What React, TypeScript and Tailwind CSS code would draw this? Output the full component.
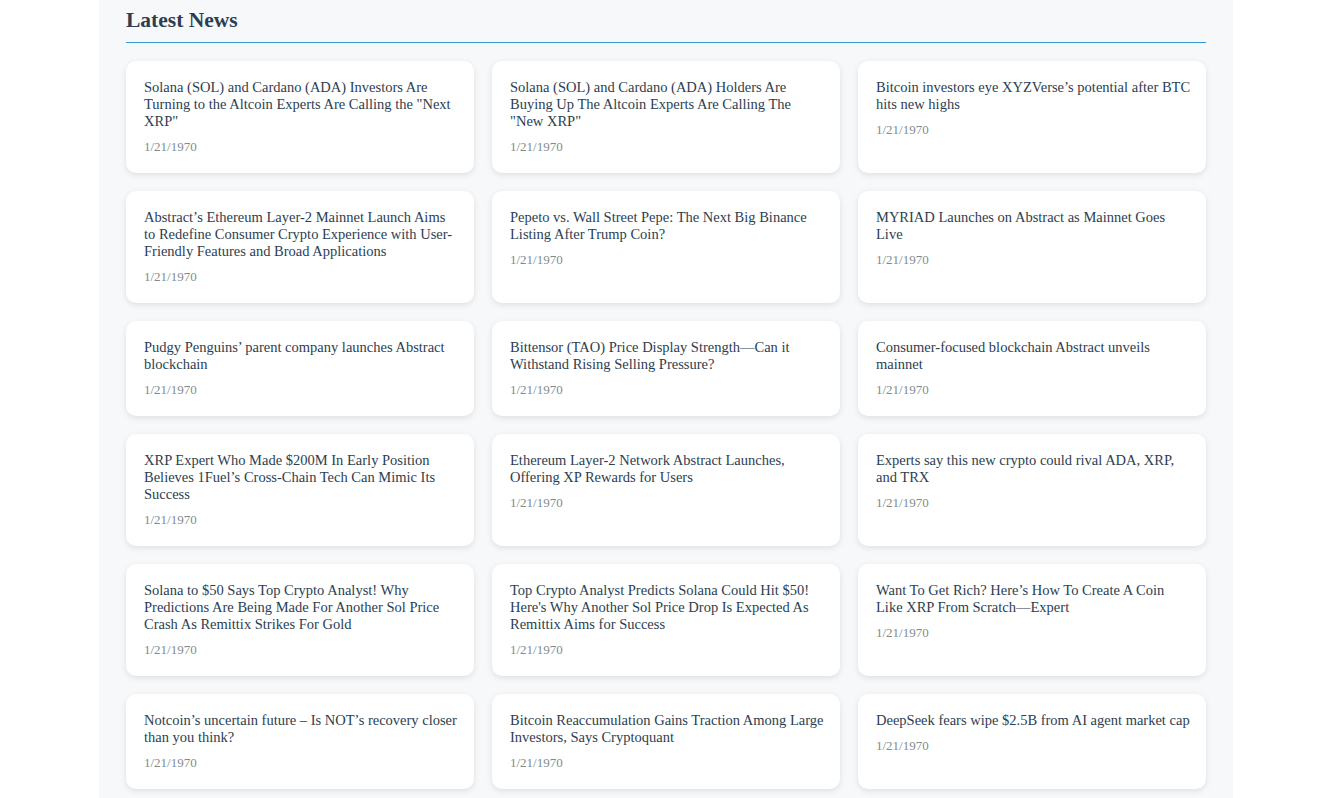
const news = [
  "Solana (SOL) and Cardano (ADA) Investors Are Turning to the Altcoin Experts Are Calling the \"Next XRP\"",
  "Solana (SOL) and Cardano (ADA) Holders Are Buying Up The Altcoin Experts Are Calling The \"New XRP\"",
  "Bitcoin investors eye XYZVerse\u2019s potential after BTC hits new highs",
  "Abstract\u2019s Ethereum Layer-2 Mainnet Launch Aims to Redefine Consumer Crypto Experience with User-Friendly Features and Broad Applications",
  "Pepeto vs. Wall Street Pepe: The Next Big Binance Listing After Trump Coin?",
  "MYRIAD Launches on Abstract as Mainnet Goes Live",
  "Pudgy Penguins\u2019 parent company launches Abstract blockchain",
  "Bittensor (TAO) Price Display Strength\u2014Can it Withstand Rising Selling Pressure?",
  "Consumer-focused blockchain Abstract unveils mainnet",
  "XRP Expert Who Made $200M In Early Position Believes 1Fuel\u2019s Cross-Chain Tech Can Mimic Its Success",
  "Ethereum Layer-2 Network Abstract Launches, Offering XP Rewards for Users",
  "Experts say this new crypto could rival ADA, XRP, and TRX",
  "Solana to $50 Says Top Crypto Analyst! Why Predictions Are Being Made For Another Sol Price Crash As Remittix Strikes For Gold",
  "Top Crypto Analyst Predicts Solana Could Hit $50! Here's Why Another Sol Price Drop Is Expected As Remittix Aims for Success",
  "Want To Get Rich? Here\u2019s How To Create A Coin Like XRP From Scratch\u2014Expert",
  "Notcoin\u2019s uncertain future \u2013 Is NOT\u2019s recovery closer than you think?",
  "Bitcoin Reaccumulation Gains Traction Among Large Investors, Says Cryptoquant",
  "DeepSeek fears wipe $2.5B from AI agent market cap",
]

export default function App() {
  return (
    <div className="min-h-screen bg-white font-['Liberation_Serif','Times_New_Roman',serif]">
      <div className="ml-[99px] w-[1134px] bg-[#f7f8fa] px-[27px] pb-6">
        <h2 className="pt-[5px] pb-[7px] text-[21.5px] font-bold leading-[30px] text-[#2c3e50] border-b border-[#3498db]">
          Latest News
        </h2>
        <div className="mt-[18px] grid grid-cols-3 gap-[18px]">
          {news.map((title, i) => (
            <div
              key={i}
              className="rounded-[10px] bg-white pl-[18px] pr-[14px] pt-[18px] pb-[19px] shadow-[0_2px_6px_rgba(0,0,0,0.1)]"
            >
              <h3 className="text-[14.5px] leading-[17px] text-[#2c3e50]">{title}</h3>
              <p className="mt-[9px] text-[13px] leading-[15px] text-[#7f8c8d]">1/21/1970</p>
            </div>
          ))}
        </div>
      </div>
    </div>
  )
}
